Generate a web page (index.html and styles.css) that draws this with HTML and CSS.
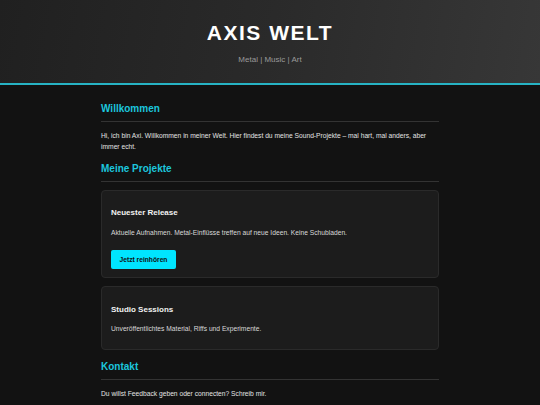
FILE: index.html
```html
<!DOCTYPE html>
<html lang="de">
<head>
<meta charset="utf-8">
<title>Axis Welt</title>
<link rel="stylesheet" href="styles.css">
</head>
<body>
<header class="site-header">
  <h1 class="site-title">AXIS WELT</h1>
  <p class="tagline">Metal | Music | Art</p>
</header>
<main class="content">
  <section class="section">
    <h2 class="section-title">Willkommen</h2>
    <p class="text">Hi, ich bin Axi. Willkommen in meiner Welt. Hier findest du meine Sound-Projekte – mal hart, mal anders, aber immer echt.</p>
  </section>
  <section class="section">
    <h2 class="section-title">Meine Projekte</h2>
    <div class="card">
      <h3 class="card-title">Neuester Release</h3>
      <p class="card-text">Aktuelle Aufnahmen. Metal-Einflüsse treffen auf neue Ideen. Keine Schubladen.</p>
      <a class="button" href="#">Jetzt reinhören</a>
    </div>
    <div class="card">
      <h3 class="card-title">Studio Sessions</h3>
      <p class="card-text">Unveröffentlichtes Material, Riffs und Experimente.</p>
    </div>
  </section>
  <section class="section">
    <h2 class="section-title">Kontakt</h2>
    <p class="text">Du willst Feedback geben oder connecten? Schreib mir.</p>
  </section>
</main>
</body>
</html>
```

FILE: styles.css
```css
* { box-sizing: border-box; }

html, body {
  margin: 0;
  padding: 0;
}

body {
  background: #121212;
  color: #e0e0e0;
  font-family: "Liberation Sans", Arial, sans-serif;
}

.site-header {
  background: linear-gradient(100deg, #202020 0%, #2a2a2a 50%, #373737 100%);
  border-bottom: 2px solid #27b3c4;
  text-align: center;
  padding: 21px 0 17px;
  height: 85px;
}

.site-title {
  margin: 0;
  font-size: 21px;
  line-height: 24px;
  font-weight: bold;
  letter-spacing: 1.5px;
  color: #ffffff;
}

.tagline {
  margin: 9px 0 0;
  font-size: 8px;
  line-height: 12px;
  color: #9a9a9a;
}

.content {
  width: 338px;
  margin: 0 auto;
  padding-top: 17.5px;
}

.section-title {
  margin: 0;
  font-size: 10px;
  line-height: 12px;
  font-weight: bold;
  color: #1cc6dd;
  padding-bottom: 6.5px;
  border-bottom: 1px solid #333333;
}

.text {
  margin: 7.5px 0 0;
  font-size: 6.7px;
  line-height: 11px;
  color: #e4e4e4;
}

.section + .section {
  margin-top: 11px;
}

.card {
  background: #1c1c1c;
  border: 1px solid #2a2a2a;
  border-radius: 4px;
  padding: 9px 9px 8.5px;
  margin-top: 7.5px;
}

.card + .card {
  margin-top: 8px;
}

.card-title {
  margin: 8.5px 0 0;
  font-size: 8px;
  line-height: 10px;
  font-weight: bold;
  color: #f2f2f2;
}

.card-text {
  margin: 8.5px 0 6px;
  font-size: 6.7px;
  line-height: 11px;
  color: #d8d8d8;
}

.button {
  display: inline-block;
  margin-top: 6px;
  background: #00e5ff;
  color: #111111;
  font-size: 6.7px;
  line-height: 19px;
  height: 19px;
  font-weight: bold;
  text-decoration: none;
  padding: 0 8.5px;
  border-radius: 2px;
}
```
